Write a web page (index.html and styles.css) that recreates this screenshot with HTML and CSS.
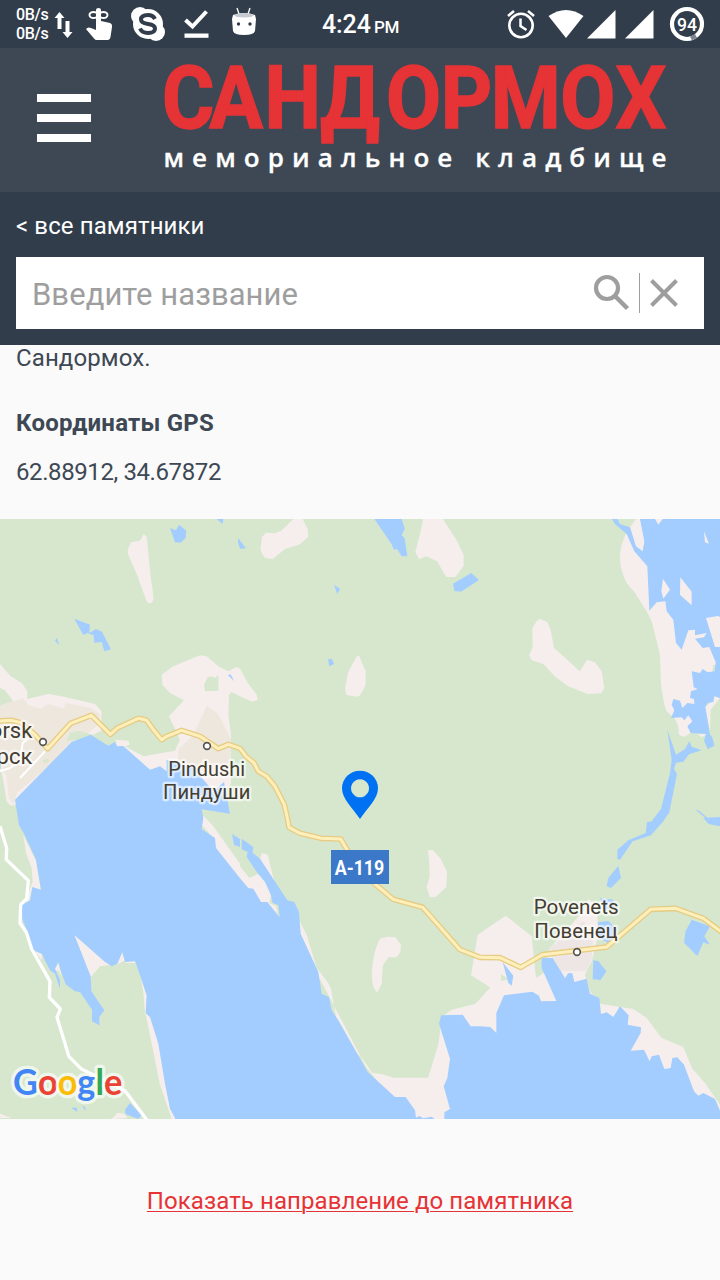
FILE: index.html
```html
<!DOCTYPE html>
<html lang="ru">
<head>
<meta charset="utf-8">
<title>Сандормох</title>
<link rel="stylesheet" href="styles.css">
</head>
<body>
<div class="status">
  <div class="rates"><span>0B/s</span><span>0B/s</span></div>
  <svg class="status-icons" viewBox="50 0 220 48" width="220" height="48" fill="#fff">
    <path d="M59.500 12l5 6h-3v11h-4v-11h-3zM67.500 38l-5-6h3v-11h4v11h3z"/>
    <path d="M96 30V10q0-2 2.500-2t2.500 2v11l9 2q2.500 1 2 4l-1.500 10q-.5 3-3 3H97q-2 0-3-1.500L86 29q2-2.500 5-1z"/>
    <ellipse cx="93.500" cy="15" rx="4" ry="3" fill="none" stroke="#fff" stroke-width="2"/>
    <ellipse cx="103.500" cy="15" rx="4" ry="3" fill="none" stroke="#fff" stroke-width="2"/>
    <circle cx="148" cy="24" r="15"/><circle cx="140" cy="16" r="9"/><circle cx="156" cy="32" r="9"/>
    <path d="M155 19q-2-4-7-4-7 0-7 4.500 0 3.500 7 4.500t7 4.500q0 4.500-7 4.500-6 0-8-4.500" fill="none" stroke="#323d4b" stroke-width="4"/>
    <path d="M185.500 20l7 6.500 14-15" fill="none" stroke="#fff" stroke-width="4"/><path d="M184.500 33.500h24v4.300h-24z"/>
    <path d="M237 8l2 6M250 8l-2 6" stroke="#fff" stroke-width="1.300"/>
    <path d="M233 15q11-4 22 0l1 4-1 12q-1 4-11 4t-11-4l-1-12z"/><path d="M234 15q10-4 20 0-1 2.500-10 2.500t-10-2.500z" fill="#c5cbd0"/>
    <circle cx="238.500" cy="24" r="1.700" fill="#323d4b"/><circle cx="250" cy="24" r="1.700" fill="#323d4b"/>
  </svg>
  <div class="clock">4:24 <small>PM</small></div>
  <svg class="status-right" viewBox="500 0 220 48" width="220" height="48" fill="#fff">
    <circle cx="521" cy="25.500" r="11.700" fill="none" stroke="#fff" stroke-width="2.600"/>
    <path d="M520.500 18.500v7.500l6 4M508 16l6-5M534 16l-6-5" fill="none" stroke="#fff" stroke-width="2.500"/>
    <path d="M548.500 16q17.500-12 35 0L566 38z"/><path d="M587 38.500h28.500V10zM625 38.500h28.500V10z"/>
    <circle cx="687" cy="24" r="15" fill="none" stroke="#fff" stroke-width="4.200"/><path d="M691 38.500l5-2.700" stroke="#7c848c" stroke-width="4.200"/>
    <text x="687" y="31" class="battery" textLength="20" lengthAdjust="spacingAndGlyphs">94</text>
  </svg>
</div>
<header class="header">
  <div class="burger"><i></i><i></i><i></i></div>
  <svg class="logo" viewBox="150 0 540 144" width="540" height="144">
    <text class="logo-name" transform="scale(.92 1)" y="80" x="176 227.500 287.500 348 419.500 479 533.500 609 669">САНДОРМОХ</text>
    <text class="logo-sub" x="163.500" y="119" textLength="503">мемориальное кладбище</text>
  </svg>
</header>
<nav class="finder">
  <a class="back">&lt; все памятники</a>
  <div class="search">
    <span>Введите название</span>
    <svg viewBox="580 257 110 72" width="110" height="72" fill="none" stroke="#9e9e9e">
      <circle cx="607" cy="288" r="11" stroke-width="4.200"/><path d="M615.500 296.500l12 12" stroke-width="4.500"/>
      <path d="M639.500 273v40" stroke-width="1"/><path d="M651.500 280.500l25 25M676.500 280.500l-25 25" stroke-width="4"/>
    </svg>
  </div>
</nav>
<main class="content">
  <p class="tail">Сандормох.</p>
  <h2>Координаты GPS</h2>
  <p class="coords">62.88912, 34.67872</p>
</main>
<svg class="map" viewBox="0 3 2160 1800" width="720" height="600">
  <rect width="2160" height="1810" fill="#d6e7ce"/>
  <g class="land">
    <path d="M383 95l10-22 27-5 11-20 9 8 12 120 9 65-5 13-9 2-8-8-27-75-28-65z"/>
    <path d="M0 438L30 473L65 495L82 520V543L145 528L195 537L285 558L305 580L302 650L345 665L385 668L390 680L375 685L430 715L525 698L540 665L507 595L552 547L510 525L487 500L485 470L520 445L600 412L620 415L655 445L685 460L710 447L720 452L745 497L770 530L774 545L757 551L720 535L695 522L687 530L685 590L693 650V800L650 830L470 790L250 700L60 840L45 862H30L20 850L5 760L0 740V563L40 550L15 517L0 510z"/>
    <path d="M70 952L108 1028L123 1118L97 1110L87 1155L78 1150L98 1090L95 1050L78 1005zM105 1300l24 8-5 18zM222 1250L335 1340L300 1345L272 1378zM350 1340l17-38 10 33h30l18 45 16 55-1 40-4 20-6-70-10-60-12-30-13-18zM437 1487L455 1500L480 1580L500 1700L515 1775L527 1803H515L480 1700zM163 1355l13-20 10 40-10-17zM0 1787l35 13H0zM335 1803l18-19 20 3 10 13z"/>
    <path d="M556 850l24 10 25 15-3 20-32-18zM598 895l14 0 28 30 80 112v55l-80-100 3-28-45-52z"/>
    <g transform="translate(720 900)">
      <path d="M0 145l28 35 45-20 20 75-5 20 21 10 5 36-35-45H58L35 217 18 210 0 190z"/><path d="M58 128l8-23 17 5 22 90z"/>
      <path d="M177 305l23 45 30 100 35 45 8 18 18 100 50 87 24 18 32 47 28 3 35 11h104l31-99 8-60 50 70-10 220H510l-130-160L170 350z"/>
      <path d="M613 592l22-17 70-17 15-15 30-35-57-36 20-122 84-57 78 62 13 125 27-18 45 97-60 140-200-59z"/>
      <path d="M930 390l100-110 15-37 25 17 5 90-20 80-20 40 15 50 30 37 100 16 40 27 45 60 65 27 27 65 38 43 45 65v43l-140-53-300-250-80-160z"/>
    </g>
    <g transform="translate(720 0)"><path d="M64 75l2-18 12-13 25 2 20-7 37-36h28l16 32v22l-24 22-45 14-37 30-22-3q-20-20-12-45z"/><path d="M549 3h60l42 65 20 43v33l-25 33h-27l-28-47-32-15-22 9-11-22 16-62zM351 413l7 2 19 45v38q-12 36-25 38l-33-5-4-20 10-50z"/></g>
    <path d="M1597 330l14-22 10-6 21 11 10 22 10 55 45 40 32 30 23-35 23 8 20 27 8 50-10 16-40 2-60-24-40-30-32-35-37-13-6-14 10-24z"/>
    <path d="M1284 996l15 1 22 24 20 40-2 46-33 31-17-1-9-31 9-30-2-50zM1117 1345q5-50 23-83l22-6 24 2 17 23-2 22-12 15h-24l-17 25-3 55-13 25q-20-10-15-78z"/>
    <path d="M1877 48L1890 50L2000 100L2160 280V440H2140L2125 540L2090 600L2078 615L2072 645L2052 657L2037 650L2035 625L2025 603L2000 580L1993 560L1983 500L1980 410L1955 310L1940 280L1905 225L1880 195Q1850 135 1865 80zM1890 28l18-25h12l18 70-5 35-30-25z"/>
    <path d="M2115 567l18-15 10-17 17 5-28 35-2 65zM2093 648h27l-15 10z"/>
  </g>
  <g fill="#eee7de">
    <path d="M0 563l70-22 15 20 35 11 25-14 47 14 4-18 75 15 28 20 2 25-250 210-10 35-15-20-6-64-20-30z"/>
    <path d="M620 563l35 25 38 75-2 110-90 0-70-30 5-50 44-42z"/>
  </g>
  <path fill="#eee6e4" d="M1650 1290l100-80 30 40-5 70-15 38-80 2-22-40z"/>
  <path d="M210 645l25-7 45 12 20-10 43 20 7 14-50 25-50-35-50 5zM128 727l15-5 5 8-15 6zM623 478l15-3 5 6 12-10v47l-40 2-3-20zM1502 1368l23 15-21 7zM1440 1390l30 20-30 28z" fill="#d6e7ce"/>
  <g class="water">
    <path d="M45 845L215 672l57-22 53 33 20-11 7 13 18-1 80 71 30-10 20 15 0-35 80 25 60 70 32-28 18 95-85-13 5 26-5 33 40 27 3 30 77 97 20 23 15 2 23 40h19l37 46-4-36-18-8-4-22-18-40-25-30-30-45 3-15-18-8v-32l35 25-2 18 22 17 82 125 21 5 14 30 5 65 53 115 10 65 22 10 8 40 20 30 88 155 82 75h32l28 40 3 23v7H525v-7l-15-28-15-75-20-120-25-80-13-12 3-53-20-60-15-42-30 2-8-30-15 35-17 8-20-13-92-81 49 124 2 45 39 57-15 20v25l-22-12v-35l-36-53-15-2-28-21-17-47-5-20-10 20 15 35v25l-15-45-15-10-25-50-25-10-20-60-13-35-2-40 25-15 7-40 26 8-15-90-36-78-15-25z"/>
    <path transform="translate(1440 0)" d="M480 3l13 67-5 30-20-15-18-57-30-10-8-15h-16l9 15 35 30 23 52 39 45 6 133 22-25 26-3 4 30 20 25 8 70 17 20 20-58 20-2v17l35-7-8 13-27 4 23 28 20-3 19 46-3 27-21 3-15-10-8 12-25-5 6 48 12 5-20 7-3 20 12 3 1 15-21-3-15 15-7-22-20-5-5 17 8 17-10 23 32-2 8 9 12-15 12 18-15 15 10 20 46 3-6 20 11 26 20-11-6-25-7-8-14-83 7-12 17-3 3-17 17 5V3z"/>
    <path transform="translate(720 900)" d="M613 903v-20l17-10-19-68 11-25 8-58-33-105 6-25 65-2 24 35h28l31 2 18 18v-60l23-53 85-11 20 12 6 17 46-1-44-99v-30h33l37 60 10-15 12 1 6 26 37-10 10 45 28 13 5 48 17-5 20 14 20-32 26 27-3 28 40 8-1 17-30 53 40-3 17 35 6-15 22-5 16 43 19-3 5-30 15-2 20 22 30 80 13 13 15-8 35 18 15 35v25z"/>
    <path d="M510 30l18 7 9-17 22 18-2 22-15 14-17-1zM650 3h20l-2 15zM714 60l24 31-18 1-6-20zM223 302l47 18-2 25 20-12 18 8 27 53-20 6-8-28-22 2-2-22-18-7-13 6zM165 368l6-8 7 22zM684 472l7-4 12 22zM1123 3h82l9 29-9 20 9 8 8 55h-17l-14-22-9 2-8-18zM1359 197l55-32 23 21-54 35-20-2zM1002 200l18 13-8 15zM984 424l12-1 6 15-14 7z"/>
    <path d="M2002 635L2028 710L2055 693L2068 670L2075 686L2105 697L2067 709L2050 731L2028 734L2022 753L2031 768L2008 883L1990 910L1953 952L1898 970L1860 1025L1852 1023V995L1885 967L1937 945L1941 912L1955 910L1983 873L2010 765L2015 725zM2085 874l12 4 45 38-15-8zM2110 900l50-3v28l-34-7z"/>
    <path d="M1855 1043l8 37-30 30-13-5 5-25zM1800 1140l40 5 2 20-30 12zM1795 1212l30-3 25 25-20 45-40-25zM2075 1205l55 20-17 30 17 25-20-7-18 41-40-40 5-35zM1780 1327l15 2 24 31-17 26-24-2zM1508 1333l32 40-5 30-10-8zM1240 1803l18-9 12 7 25-5 9 7zM696 948l24 15v24l-18-6zM375 1775l15-20 35 37-10 11-38-15zM214 1770l15-2 4 14zM246 1764l9 2 2 14z"/>
  </g>
  <path class="land" d="M1989 182l21 33-20 27-6-22zM2041 178l34 43v41l-35-32zM2112 40l15 37-12-4zM1965 3h23l-13 17zM2118 300l36-6 6 3v90h-15zM612 784l8-8 0 15z"/>
  <path d="M0 760l30-10 30-20 8-55 25-20M60 780l75-80" class="street thin"/>
  <path d="M0 925L20 990L19 1025L85 1088L80 1142L62 1160L60 1215L79 1243L95 1293L150 1390L148 1438L181 1473L171 1498L207 1616L243 1652L375 1718L440 1805" class="street"/>
  <path class="road-edge" d="M-5 609L35 607L62 614L105 650L143 692L212 616L274 592L331 649L352 630L415 601L440 607L460 635L485 665L500 655L545 637L600 655L655 692L685 679L720 691L738 715L762 735L775 760L800 775L825 805L853 860L862 900L867 928L900 946L963 961L1022 963L1050 1010L1125 1098L1180 1144L1268 1168L1380 1295L1440 1318L1500 1319L1562 1348L1628 1310L1820 1287L1952 1174L2027 1171L2110 1201L2170 1246"/>
  <path class="road" d="M-5 609L35 607L62 614L105 650L143 692L212 616L274 592L331 649L352 630L415 601L440 607L460 635L485 665L500 655L545 637L600 655L655 692L685 679L720 691L738 715L762 735L775 760L800 775L825 805L853 860L862 900L867 928L900 946L963 961L1022 963L1050 1010L1125 1098L1180 1144L1268 1168L1380 1295L1440 1318L1500 1319L1562 1348L1628 1310L1820 1287L1952 1174L2027 1171L2110 1201L2170 1246"/>
  <g fill="#fff" stroke="#555" stroke-width="5"><circle cx="129" cy="672" r="10"/><circle cx="621" cy="684" r="10"/><circle cx="1731" cy="1302" r="10"/></g>
  <g class="label">
    <text x="97" y="661" class="big">orsk</text><text x="97" y="739" class="big">рск</text>
    <text x="505" y="773" textLength="230" lengthAdjust="spacingAndGlyphs">Pindushi</text>
    <text x="489" y="844" textLength="262" lengthAdjust="spacingAndGlyphs">Пиндуши</text>
    <text x="1601" y="1189" textLength="255" lengthAdjust="spacingAndGlyphs">Povenets</text>
    <text x="1603" y="1260" textLength="250" lengthAdjust="spacingAndGlyphs">Повенец</text>
  </g>
  <rect x="993" y="996" width="174" height="102" fill="#3c78c8"/>
  <text class="shield" x="1004" y="1071" textLength="149" lengthAdjust="spacingAndGlyphs">A-119</text>
  <path fill="#0071f2" fill-rule="evenodd" d="M1080 903C1058 870 1026 843 1026 811a54 53 0 0 1 108 0C1134 843 1102 870 1080 903zM1080 784a27 27 0 1 0 .1 0z"/>
  <text class="google" x="39" y="1731" textLength="328" lengthAdjust="spacingAndGlyphs"><tspan fill="#4285f4">G</tspan><tspan fill="#ea4335">o</tspan><tspan fill="#fbbc05">o</tspan><tspan fill="#4285f4">g</tspan><tspan fill="#34a853">l</tspan><tspan fill="#ea4335">e</tspan></text>
</svg>
<footer class="footer"><a>Показать направление до памятника</a></footer>
</body>
</html>
```
FILE: styles.css
```css
body { margin: 0; width: 720px; height: 1280px; overflow: hidden; display: flex; flex-direction: column; background: #fafafa; font-family: Roboto, sans-serif; color: #3d4854; }
svg { display: block; flex: none; }
p, h2 { margin: 0; }
.status { height: 48px; flex: none; display: flex; background: #323d4b; color: #fff; }
.rates { width: 34px; padding: 5px 0 0 16px; display: flex; flex-direction: column; font-size: 16px; font-weight: 500; line-height: 19px; letter-spacing: -.3px; }
.clock { width: 230px; box-sizing: border-box; padding-left: 52px; font-size: 25px; line-height: 50px; font-weight: 500; white-space: nowrap; letter-spacing: -.1px; }
.clock small { font-size: 17px; margin-left: -3px; letter-spacing: -.3px; }
.battery { font-size: 19px; font-weight: 500; text-anchor: middle; }
.header { height: 144px; flex: none; display: flex; background: #3d4854; }
.burger { width: 54px; padding: 46px 59px 0 37px; display: flex; flex-direction: column; gap: 12px; }
.burger i { height: 8px; background: #fff; }
.logo { overflow: visible; }
.logo-name { font: 700 87px Roboto, sans-serif; fill: #e63336; stroke: #e63336; stroke-width: 1.5px; }
.logo-sub { font: 600 26px "Open Sans", sans-serif; fill: #fff; stroke: #fff; stroke-width: .3px; }
.finder { height: 153px; flex: none; box-sizing: border-box; padding: 18px 16px 16px; background: #323d4b; color: #fff; }
.back { display: block; height: 47px; font-size: 24px; line-height: 32px; letter-spacing: .1px; }
.search { height: 72px; display: flex; justify-content: space-between; padding: 0 14px 0 16px; background: #fff; color: #9e9e9e; font-size: 31px; line-height: 75px; letter-spacing: .05px; }
.content { height: 174px; flex: none; padding-left: 16px; font-size: 24px; line-height: 28px; }
.tail { height: 64px; line-height: 26px; letter-spacing: .1px; }
.content h2 { height: 49px; font-size: 24px; font-weight: 700; letter-spacing: .2px; }
.coords { letter-spacing: -.4px; }
.map { font-family: Roboto, sans-serif; }
.land { fill: #f6eeed; }
.water { fill: #a3cdff; }
.street { fill: none; stroke: #fff; stroke-width: 10; stroke-linejoin: round; }
.thin { stroke-width: 6; }
.road, .road-edge { fill: none; stroke: #e6cc84; stroke-width: 17; stroke-linejoin: round; }
.road { stroke: #fff0bb; stroke-width: 9; }
.label { font-size: 61px; fill: #453d31; stroke: #fff; stroke-opacity: .6; stroke-width: 14; stroke-linejoin: round; paint-order: stroke; }
.big { font-size: 66px; text-anchor: end; }
.shield { font-size: 58px; font-weight: 700; fill: #fff; }
.google { font: 700 108px Lato, sans-serif; stroke: #fff; stroke-opacity: .65; stroke-width: 20; stroke-linejoin: round; paint-order: stroke; }
.footer { padding-top: 66px; text-align: center; font-size: 24px; line-height: 32px; color: #e63336; text-decoration: underline; text-underline-offset: 2px; text-decoration-thickness: 1px; letter-spacing: .08px; }
```
